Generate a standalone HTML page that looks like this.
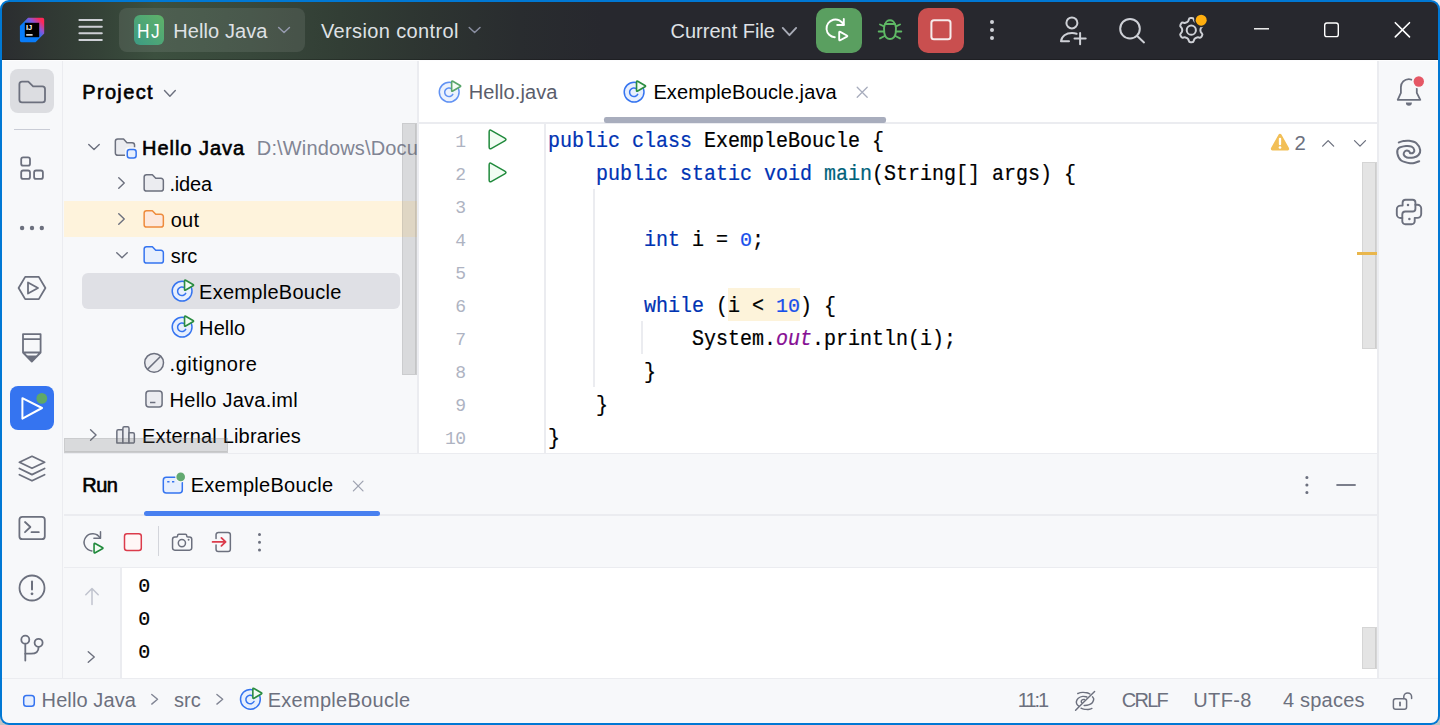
<!DOCTYPE html>
<html lang="en"><head><meta charset="utf-8"><title>Hello Java – ExempleBoucle.java</title>
<style>
html,body{margin:0;padding:0;}
body{width:1440px;height:725px;overflow:hidden;background:#fff;position:relative;font-family:"Liberation Sans", sans-serif;}
#win{position:absolute;left:0;top:0;width:1440px;height:725px;box-sizing:border-box;border-radius:9px;background:#0078D4;overflow:hidden;}
#win div,#win span{position:absolute;box-sizing:border-box;}
#titlebar{border-radius:7px 7px 0 0;}
.t{font-family:"Liberation Sans", sans-serif;line-height:1;white-space:pre;}
.m{font-family:"Liberation Mono", monospace;line-height:1;white-space:pre;}
.d{-webkit-text-stroke:0.22px currentColor;transform:scaleY(1.02);transform-origin:0 76.65%;}
.c{transform:scaleY(1.06);transform-origin:0 76.65%;-webkit-text-stroke:0.22px currentColor;}
#ico{position:absolute;left:0;top:0;width:1440px;height:725px;pointer-events:none;}
.cnr{position:absolute;width:10px;height:10px;}
</style></head><body>
<div class="cnr" style="left:0;top:715px;background:#C4C4C4"></div>
<div class="cnr" style="left:1430px;top:715px;background:#C4C4C4"></div>
<div class="cnr" style="left:1430px;top:0;background:#EDEDED"></div>
<div id="win">
<div id="titlebar" style="left:2px;top:2px;width:1436px;height:58px;background:linear-gradient(90deg,#2B2D30 0px,#303833 48px,#344237 98px,#3C503F 153px,#38483B 248px,#323E35 338px,#2D3431 428px,#292C2F 518px,#27282E 600px)"></div>
<div style="left:119px;top:8px;width:186px;height:44px;background:rgba(255,255,255,0.09);border-radius:8px;"></div>
<div style="left:134px;top:15px;width:30px;height:30px;background:linear-gradient(225deg,#60B268 0%,#3C9A84 100%);border-radius:6px;"></div>
<span class="t" style="left:137.3px;top:22.3px;font-size:19.7px;color:#fff;letter-spacing:1.7px;transform:scaleX(0.88);transform-origin:0 0;">HJ</span>
<span class="t" style="left:173.3px;top:21.07px;font-size:20px;color:#DFE1E5;letter-spacing:0.08px;">Hello Java</span>
<span class="t" style="left:321px;top:21.07px;font-size:20px;color:#DFE1E5;letter-spacing:0.36px;">Version control</span>
<span class="t" style="left:670.5px;top:21.07px;font-size:20px;color:#DFE1E5;">Current File</span>
<div style="left:816.3px;top:7.6px;width:45.3px;height:45.2px;background:#5A9F60;border-radius:10px;"></div>
<div style="left:918.4px;top:7.6px;width:45.2px;height:45.2px;background:#C94F4F;border-radius:10px;"></div>
<div style="left:2px;top:60px;width:1436px;height:663px;background:#F7F8FA;border-radius:0 0 7px 7px;"></div>
<div style="left:2px;top:60px;width:1436px;height:1.2px;background:#FDFDFE;"></div>
<div style="left:2px;top:58.8px;width:1436px;height:1.2px;background:rgba(0,0,0,0.22);"></div>
<div style="left:62.2px;top:61px;width:1.3px;height:617px;background:#EBECF0;"></div>
<div style="left:1377px;top:61px;width:2px;height:617px;background:#EBECF0;"></div>
<div style="left:419px;top:61px;width:958px;height:391.7px;background:#fff;"></div>
<div style="left:417px;top:61px;width:2px;height:391.7px;background:#EBECF0;"></div>
<div style="left:419px;top:122px;width:958px;height:1.7px;background:#EBECF0;"></div>
<div style="left:64px;top:452.7px;width:1313px;height:1.5px;background:#EBECF0;"></div>
<div style="left:64px;top:514px;width:1313px;height:2px;background:#EBECF0;"></div>
<div style="left:64px;top:566.6px;width:1313px;height:1.6px;background:#EBECF0;"></div>
<div style="left:122px;top:568.2px;width:1255px;height:109.5px;background:#fff;"></div>
<div style="left:120.3px;top:568.2px;width:1.8px;height:109.5px;background:#EBECF0;"></div>
<div style="left:2px;top:677.7px;width:1436px;height:1.5px;background:#EBECF0;"></div>
<div style="left:10px;top:69px;width:44px;height:44px;background:#DCDDE1;border-radius:8px;"></div>
<div style="left:14px;top:129px;width:36px;height:1px;background:#C9CCD6;"></div>
<div style="left:10px;top:386px;width:44px;height:44px;background:#3574F0;border-radius:8px;"></div>
<span class="t" style="left:82.2px;top:81.87px;font-size:20px;color:#000;letter-spacing:1.35px;-webkit-text-stroke:0.6px #000;">Project</span>
<div style="left:63.5px;top:201px;width:353.5px;height:36px;background:#FEF3DC;"></div>
<div style="left:82px;top:273px;width:318px;height:36px;background:#DFE0E5;border-radius:6px;"></div>
<span class="t" style="left:142.1px;top:138.07px;font-size:20px;color:#000;letter-spacing:0.95px;-webkit-text-stroke:0.6px #000;">Hello Java</span>
<span class="t" style="left:256.8px;top:138.07px;font-size:20px;color:#818594;letter-spacing:0.15px;width:160.2px;overflow:hidden;">D:\Windows\Docu</span>
<span class="t" style="left:169.5px;top:174.07px;font-size:20px;color:#000;letter-spacing:-0.2px;">.idea</span>
<span class="t" style="left:170.7px;top:210.07px;font-size:20px;color:#000;letter-spacing:0.3px;">out</span>
<span class="t" style="left:170.7px;top:246.07px;font-size:20px;color:#000;">src</span>
<span class="t" style="left:199.1px;top:282.07px;font-size:20px;color:#000;letter-spacing:0.27px;">ExempleBoucle</span>
<span class="t" style="left:199.1px;top:318.07px;font-size:20px;color:#000;letter-spacing:0.1px;">Hello</span>
<span class="t" style="left:169.6px;top:354.07px;font-size:20px;color:#000;letter-spacing:0.55px;">.gitignore</span>
<span class="t" style="left:169.6px;top:390.07px;font-size:20px;color:#000;letter-spacing:0.28px;">Hello Java.iml</span>
<span class="t" style="left:142px;top:426.07px;font-size:20px;color:#000;letter-spacing:0.19px;">External Libraries</span>
<span class="t" style="left:468.7px;top:81.77px;font-size:20px;color:#5A5D6B;letter-spacing:0.1px;">Hello.java</span>
<span class="t" style="left:653.4px;top:81.77px;font-size:20px;color:#000;letter-spacing:0.12px;">ExempleBoucle.java</span>
<div style="left:604px;top:117.1px;width:282px;height:5.6px;background:#A8ADBD;border-radius:2.2px;"></div>
<div style="left:544.2px;top:123.7px;width:1.8px;height:329px;background:#EBECF0;"></div>
<span class="m" style="left:455.3px;top:132.80px;font-size:18px;color:#AEB3C2;letter-spacing:-0.5px;">1</span>
<span class="m" style="left:455.3px;top:165.80px;font-size:18px;color:#AEB3C2;letter-spacing:-0.5px;">2</span>
<span class="m" style="left:455.3px;top:198.80px;font-size:18px;color:#AEB3C2;letter-spacing:-0.5px;">3</span>
<span class="m" style="left:455.3px;top:231.80px;font-size:18px;color:#AEB3C2;letter-spacing:-0.5px;">4</span>
<span class="m" style="left:455.3px;top:264.80px;font-size:18px;color:#AEB3C2;letter-spacing:-0.5px;">5</span>
<span class="m" style="left:455.3px;top:297.80px;font-size:18px;color:#AEB3C2;letter-spacing:-0.5px;">6</span>
<span class="m" style="left:455.3px;top:330.80px;font-size:18px;color:#AEB3C2;letter-spacing:-0.5px;">7</span>
<span class="m" style="left:455.3px;top:363.80px;font-size:18px;color:#AEB3C2;letter-spacing:-0.5px;">8</span>
<span class="m" style="left:455.3px;top:396.80px;font-size:18px;color:#AEB3C2;letter-spacing:-0.5px;">9</span>
<span class="m" style="left:445.0px;top:429.80px;font-size:18px;color:#AEB3C2;letter-spacing:-0.5px;">10</span>
<div style="left:728px;top:288px;width:72px;height:33px;background:#FDF3DA;"></div>
<span class="m c" style="left:547.9px;top:131.67px;font-size:20px;color:#0033B3;">public</span>
<span class="m c" style="left:631.9px;top:131.67px;font-size:20px;color:#0033B3;">class</span>
<span class="m c" style="left:703.9px;top:131.67px;font-size:20px;color:#000;">ExempleBoucle {</span>
<span class="m c" style="left:595.9px;top:164.67px;font-size:20px;color:#0033B3;">public</span>
<span class="m c" style="left:679.9px;top:164.67px;font-size:20px;color:#0033B3;">static</span>
<span class="m c" style="left:763.9px;top:164.67px;font-size:20px;color:#0033B3;">void</span>
<span class="m c" style="left:823.9px;top:164.67px;font-size:20px;color:#00627A;">main</span>
<span class="m c" style="left:871.9px;top:164.67px;font-size:20px;color:#000;">(String[] args) {</span>
<span class="m c" style="left:643.9px;top:230.67px;font-size:20px;color:#0033B3;">int</span>
<span class="m c" style="left:691.9px;top:230.67px;font-size:20px;color:#000;">i = </span>
<span class="m d" style="left:739.9px;top:230.67px;font-size:20px;color:#1750EB;">0</span>
<span class="m c" style="left:751.9px;top:230.67px;font-size:20px;color:#000;">;</span>
<span class="m c" style="left:643.9px;top:296.67px;font-size:20px;color:#0033B3;">while</span>
<span class="m c" style="left:715.9px;top:296.67px;font-size:20px;color:#000;">(i &lt; </span>
<span class="m d" style="left:775.9px;top:296.67px;font-size:20px;color:#1750EB;">10</span>
<span class="m c" style="left:799.9px;top:296.67px;font-size:20px;color:#000;">) {</span>
<span class="m c" style="left:691.9px;top:329.67px;font-size:20px;color:#000;">System.</span>
<span class="m c" style="left:775.9px;top:329.67px;font-size:20px;color:#871094;font-style:italic;">out</span>
<span class="m c" style="left:811.9px;top:329.67px;font-size:20px;color:#000;">.println(i);</span>
<span class="m c" style="left:643.9px;top:362.67px;font-size:20px;color:#000;">}</span>
<span class="m c" style="left:595.9px;top:395.67px;font-size:20px;color:#000;">}</span>
<span class="m c" style="left:547.9px;top:428.67px;font-size:20px;color:#000;">}</span>
<div style="left:593.2px;top:189px;width:1.4px;height:198px;background:#EBECF0;"></div>
<div style="left:641.2px;top:321px;width:1.4px;height:33px;background:#EBECF0;"></div>
<span class="t" style="left:1294.4px;top:132.62px;font-size:20.3px;color:#6C707E;">2</span>
<span class="t" style="left:82.3px;top:474.87px;font-size:20px;color:#000;letter-spacing:-0.55px;-webkit-text-stroke:0.6px #000;">Run</span>
<span class="t" style="left:190.7px;top:474.87px;font-size:20px;color:#000;letter-spacing:0.28px;">ExempleBoucle</span>
<div style="left:144px;top:511px;width:236px;height:5px;background:#4880F0;border-radius:2.5px;"></div>
<div style="left:158px;top:526px;width:1px;height:30px;background:#D3D5DB;"></div>
<span class="m d" style="left:138.3px;top:577.27px;font-size:20px;color:#000;">0</span>
<span class="m d" style="left:138.3px;top:610.27px;font-size:20px;color:#000;">0</span>
<span class="m d" style="left:138.3px;top:643.27px;font-size:20px;color:#000;">0</span>
<span class="t" style="left:41.6px;top:689.87px;font-size:20px;color:#6C707E;letter-spacing:0.1px;">Hello Java</span>
<span class="t" style="left:174px;top:689.87px;font-size:20px;color:#6C707E;">src</span>
<span class="t" style="left:267.7px;top:689.87px;font-size:20px;color:#6C707E;letter-spacing:0.28px;">ExempleBoucle</span>
<span class="t" style="left:1017.8px;top:690.07px;font-size:20px;color:#6C707E;letter-spacing:-2.0px;">11:1</span>
<span class="t" style="left:1121.7px;top:690.07px;font-size:20px;color:#6C707E;letter-spacing:-1.7px;">CRLF</span>
<span class="t" style="left:1193.2px;top:690.07px;font-size:20px;color:#6C707E;letter-spacing:0.4px;">UTF-8</span>
<span class="t" style="left:1283px;top:690.07px;font-size:20px;color:#6C707E;letter-spacing:0.2px;">4 spaces</span>
<svg id="ico" viewBox="0 0 1440 725" width="1440" height="725">
<path d="M278.65000000000003 27.55 L284.05 32.45 L289.45 27.55" fill="none" stroke="#969BAF" stroke-width="1.5" stroke-linecap="round" stroke-linejoin="round"/>
<path d="M469.20000000000005 27.55 L474.6 32.45 L480.0 27.55" fill="none" stroke="#8A8FA2" stroke-width="1.5" stroke-linecap="round" stroke-linejoin="round"/>
<path d="M782.75 27.95 L789.45 35.15 L796.1500000000001 27.95" fill="none" stroke="#A8ABB6" stroke-width="1.9" stroke-linecap="round" stroke-linejoin="round"/>
<path d="M79.4 19.95 H101.8" stroke="#CED0D6" stroke-width="2" stroke-linecap="round"/>
<path d="M79.4 26.65 H101.8" stroke="#CED0D6" stroke-width="2" stroke-linecap="round"/>
<path d="M79.4 33.35 H101.8" stroke="#CED0D6" stroke-width="2" stroke-linecap="round"/>
<path d="M79.4 40.05 H101.8" stroke="#CED0D6" stroke-width="2" stroke-linecap="round"/>
<defs><linearGradient id="lg" x1="0" y1="1" x2="1" y2="0"><stop offset="0.47" stop-color="#087CFA"/><stop offset="0.68" stop-color="#8A55D8"/><stop offset="0.88" stop-color="#FE2857"/></linearGradient></defs>
<path d="M28 17.8 H42.5 a1.7 1.7 0 0 1 1.7 1.7 V33.5 L35.5 42.2 H21.6 a1.7 1.7 0 0 1 -1.7 -1.7 V26 Z" fill="url(#lg)"/>
<rect x="24.8" y="22.8" width="14.4" height="14.4" fill="#000"/>
<text x="26" y="29.8" font-family="Liberation Sans, sans-serif" font-size="7.5" font-weight="700" fill="#fff">IJ</text>
<rect x="26.2" y="34.2" width="6.4" height="1.4" fill="#fff"/>
<g fill="none" stroke="#fff" stroke-width="1.9" stroke-linecap="round" stroke-linejoin="round"><path d="M834.8 37.3 A8.9 8.9 0 1 1 843.6 24.9"/><path d="M837.2 25 H843.8 V18.9"/><path d="M839.20 32.50 Q839.20 31.30 840.25 31.88 L846.85 35.47 Q847.90 36.05 846.85 36.63 L840.25 40.22 Q839.20 40.80 839.20 39.60 Z" fill="#5A9F60"/></g>
<g fill="none" stroke="#5FB865" stroke-width="1.9" stroke-linecap="round" stroke-linejoin="round"><path d="M884.9 24 H895.1 C896.3 27 896.3 30 895.7 33 C895 37 892.8 39 890 39 C887.2 39 885 37 884.3 33 C883.7 30 883.7 27 884.9 24 Z"/><path d="M885.5 24 a4.5 3.7 0 0 1 9 0"/><path d="M884.1 26.4 L880 24.5 M883.9 31.5 H878.7 M884.6 36 L880 38.4 M895.9 26.4 L900 24.5 M896.1 31.5 H901.3 M895.4 36 L900 38.4"/></g>
<rect x="931.4" y="20.25" width="19.1" height="19.1" rx="2.6" fill="none" stroke="#F6ECEC" stroke-width="2"/>
<circle cx="992" cy="21.9" r="2" fill="#CED0D6"/>
<circle cx="992" cy="30" r="2" fill="#CED0D6"/>
<circle cx="992" cy="38.1" r="2" fill="#CED0D6"/>
<g fill="none" stroke="#CED0D6" stroke-width="2" stroke-linecap="round"><circle cx="1071.9" cy="22.9" r="5.5"/><path d="M1061 41.3 c0.5 -5 5 -8.3 11 -8.3 c1.8 0 3.3 0.3 4.6 0.8 M1061 41.3 H1069"/><path d="M1080.1 33 V44.2 M1074.5 38.6 H1085.7"/></g>
<g fill="none" stroke="#CED0D6" stroke-width="2" stroke-linecap="round"><circle cx="1130" cy="28.7" r="9.8"/><path d="M1137.2 36 L1144 42.4"/></g>
<path d="M1188.81 19.51 Q1189.12 18.04 1190.62 18.04 L1191.98 18.04 Q1193.48 18.04 1193.79 19.51 L1193.86 19.84 Q1194.17 21.31 1195.47 22.06 L1196.22 22.49 Q1197.52 23.24 1198.95 22.78 L1199.27 22.67 Q1200.69 22.21 1201.44 23.51 L1202.12 24.68 Q1202.87 25.98 1201.76 26.99 L1201.51 27.21 Q1200.40 28.22 1200.40 29.72 L1200.40 30.58 Q1200.40 32.08 1201.51 33.09 L1201.76 33.31 Q1202.87 34.32 1202.12 35.62 L1201.44 36.79 Q1200.69 38.09 1199.27 37.63 L1198.95 37.52 Q1197.52 37.06 1196.22 37.81 L1195.47 38.24 Q1194.17 38.99 1193.86 40.46 L1193.79 40.79 Q1193.48 42.26 1191.98 42.26 L1190.62 42.26 Q1189.12 42.26 1188.81 40.79 L1188.74 40.46 Q1188.43 38.99 1187.13 38.24 L1186.38 37.81 Q1185.08 37.06 1183.65 37.52 L1183.33 37.63 Q1181.91 38.09 1181.16 36.79 L1180.48 35.62 Q1179.73 34.32 1180.84 33.31 L1181.09 33.09 Q1182.20 32.08 1182.20 30.58 L1182.20 29.72 Q1182.20 28.22 1181.09 27.21 L1180.84 26.99 Q1179.73 25.98 1180.48 24.68 L1181.16 23.51 Q1181.91 22.21 1183.33 22.67 L1183.65 22.78 Q1185.08 23.24 1186.38 22.49 L1187.13 22.06 Q1188.43 21.31 1188.74 19.84 Z" fill="none" stroke="#CED0D6" stroke-width="2" stroke-linejoin="round"/>
<circle cx="1191.3" cy="30.15" r="4.6" fill="none" stroke="#CED0D6" stroke-width="2"/>
<circle cx="1201.2" cy="20.2" r="7" fill="#27282E"/><circle cx="1201.2" cy="20.2" r="5.5" fill="#FFAF0F"/>
<path d="M1254 28.8 H1269" stroke="#fff" stroke-width="1.4"/>
<rect x="1324.7" y="23" width="13.6" height="13.6" rx="2.2" fill="none" stroke="#fff" stroke-width="1.4"/>
<path d="M1395.3 22.7 L1409.5 36.9 M1409.5 22.7 L1395.3 36.9" stroke="#fff" stroke-width="1.6" stroke-linecap="round"/>
<path d="M19.4 84.3 a2.6 2.6 0 0 1 2.6 -2.6 h6.3 l4.8 4.6 h9.3 a2.6 2.6 0 0 1 2.6 2.6 v10.9 a2.6 2.6 0 0 1 -2.6 2.6 h-20.4 a2.6 2.6 0 0 1 -2.6 -2.6 Z" fill="none" stroke="#6C707E" stroke-width="1.8" stroke-linejoin="round"/>
<rect x="21.2" y="157.3" width="8.8" height="8.4" rx="2" fill="none" stroke="#6C707E" stroke-width="1.8"/>
<rect x="21.2" y="170.5" width="8.8" height="8.4" rx="2" fill="none" stroke="#6C707E" stroke-width="1.8"/>
<rect x="34.1" y="170.5" width="8.8" height="8.4" rx="2" fill="none" stroke="#6C707E" stroke-width="1.8"/>
<circle cx="22.1" cy="228" r="2.2" fill="#6C707E"/>
<circle cx="32" cy="228" r="2.2" fill="#6C707E"/>
<circle cx="41.8" cy="228" r="2.2" fill="#6C707E"/>
<path d="M18.6 288 L25.2 276.9 H38.8 L45.4 288 L38.8 299.1 H25.2 Z" fill="none" stroke="#6C707E" stroke-width="1.8" stroke-linejoin="round"/>
<path d="M28 282.5 L38 288 L28 293.5 Z" fill="none" stroke="#6C707E" stroke-width="1.8" stroke-linejoin="round"/>
<path d="M23 334.2 H40.6 V352.5 L31.8 361.5 L23 352.5 Z M23 339.2 H40.6 M23 352.5 H40.6" fill="none" stroke="#6C707E" stroke-width="1.8" stroke-linejoin="round"/>
<path d="M27 356 H36.6 L31.8 361.5 Z" fill="#6C707E" stroke="#6C707E" stroke-width="1" stroke-linejoin="round"/>
<path d="M22.4 398.2 L42 408 L22.4 418.6 Z" fill="none" stroke="#fff" stroke-width="2" stroke-linejoin="round"/>
<circle cx="41.8" cy="398.4" r="5.4" fill="#5FA868"/>
<g fill="none" stroke="#6C707E" stroke-width="1.8" stroke-linejoin="round" stroke-linecap="round"><path d="M32 456.3 L44.6 462.3 L32 468.3 L19.4 462.3 Z"/><path d="M19.4 468.5 L32 474.6 L44.6 468.5"/><path d="M19.4 474.7 L32 480.8 L44.6 474.7"/></g>
<g fill="none" stroke="#6C707E" stroke-width="1.8" stroke-linejoin="round" stroke-linecap="round"><rect x="19.4" y="516.8" width="25.4" height="22.4" rx="3"/><path d="M25 522 L30.4 527 L25 532.2"/><path d="M31.5 532.2 H38.8"/></g>
<circle cx="32" cy="588" r="12.5" fill="none" stroke="#6C707E" stroke-width="1.8"/><path d="M32 581.5 V589.5" stroke="#6C707E" stroke-width="2" stroke-linecap="round"/><circle cx="32" cy="593.8" r="1.4" fill="#6C707E"/>
<g fill="none" stroke="#6C707E" stroke-width="1.8" stroke-linecap="round"><circle cx="25.3" cy="639.7" r="4"/><circle cx="38.6" cy="642.8" r="4"/><path d="M25.3 643.8 V660.5"/><path d="M38.6 646.9 c0 5 -3.5 6.8 -7.5 6.8 H25.3"/></g>
<path d="M164.5 90.39999999999999 L169.9 96.2 L175.3 90.39999999999999" fill="none" stroke="#6C707E" stroke-width="1.4" stroke-linecap="round" stroke-linejoin="round"/>
<path d="M88.75 144.5 L94 149.60000000000002 L99.25 144.5" fill="none" stroke="#6C707E" stroke-width="1.4" stroke-linecap="round" stroke-linejoin="round"/>
<path d="M115.35 141.35 a2.4 2.4 0 0 1 2.4 -2.4 H123.55 L126.95 142.64999999999998 H132.14999999999998 a2.4 2.4 0 0 1 2.4 2.4 V152.95 a2.4 2.4 0 0 1 -2.4 2.4 H117.75 a2.4 2.4 0 0 1 -2.4 -2.4 Z" fill="#EBECF0" stroke="#6C707E" stroke-width="1.5" stroke-linejoin="round"/>
<rect x="125" y="147.3" width="13.4" height="13" rx="3.5" fill="#F7F8FA"/>
<rect x="127.25" y="149.55" width="8.9" height="8.5" rx="2.5" fill="#E7EFFD" stroke="#3574F0" stroke-width="1.5"/>
<path d="M118.75 177.75 L124.25 183 L118.75 188.25" fill="none" stroke="#6C707E" stroke-width="1.4" stroke-linecap="round" stroke-linejoin="round"/>
<path d="M144.15 177.05 a2.4 2.4 0 0 1 2.4 -2.4 H152.35 L155.75 178.35 H160.95 a2.4 2.4 0 0 1 2.4 2.4 V188.65 a2.4 2.4 0 0 1 -2.4 2.4 H146.55 a2.4 2.4 0 0 1 -2.4 -2.4 Z" fill="#EBECF0" stroke="#6C707E" stroke-width="1.5" stroke-linejoin="round"/>
<path d="M118.75 213.75 L124.25 219 L118.75 224.25" fill="none" stroke="#6C707E" stroke-width="1.4" stroke-linecap="round" stroke-linejoin="round"/>
<path d="M144.15 213.05 a2.4 2.4 0 0 1 2.4 -2.4 H152.35 L155.75 214.35 H160.95 a2.4 2.4 0 0 1 2.4 2.4 V224.65 a2.4 2.4 0 0 1 -2.4 2.4 H146.55 a2.4 2.4 0 0 1 -2.4 -2.4 Z" fill="#FDE8DC" stroke="#EE8B3C" stroke-width="1.5" stroke-linejoin="round"/>
<path d="M116.75 252.64999999999998 L122 257.75 L127.25 252.64999999999998" fill="none" stroke="#6C707E" stroke-width="1.4" stroke-linecap="round" stroke-linejoin="round"/>
<path d="M144.15 249.05 a2.4 2.4 0 0 1 2.4 -2.4 H152.35 L155.75 250.35 H160.95 a2.4 2.4 0 0 1 2.4 2.4 V260.65000000000003 a2.4 2.4 0 0 1 -2.4 2.4 H146.55 a2.4 2.4 0 0 1 -2.4 -2.4 Z" fill="#E7EFFD" stroke="#3574F0" stroke-width="1.5" stroke-linejoin="round"/>
<g opacity="1"><circle cx="182.1" cy="291.1" r="9.9" fill="#E7EFFD" stroke="#3574F0" stroke-width="1.5"/><path d="M185.70 293.32 A4.3 4.3 0 1 1 184.66 288.01" fill="none" stroke="#3574F0" stroke-width="1.5" stroke-linecap="round"/><path d="M184.55 280.90 Q184.55 279.60 185.67 280.25 L192.98 284.50 Q194.10 285.15 192.98 285.80 L185.67 290.05 Q184.55 290.70 184.55 289.40 Z" fill="#F2FCF3" stroke="#2A8C41" stroke-width="1.6" stroke-linejoin="round"/></g>
<g opacity="1"><circle cx="182.1" cy="327.1" r="9.9" fill="#E7EFFD" stroke="#3574F0" stroke-width="1.5"/><path d="M185.70 329.32 A4.3 4.3 0 1 1 184.66 324.01" fill="none" stroke="#3574F0" stroke-width="1.5" stroke-linecap="round"/><path d="M184.55 316.90 Q184.55 315.60 185.67 316.25 L192.98 320.50 Q194.10 321.15 192.98 321.80 L185.67 326.05 Q184.55 326.70 184.55 325.40 Z" fill="#F2FCF3" stroke="#2A8C41" stroke-width="1.6" stroke-linejoin="round"/></g>
<circle cx="154.1" cy="362.8" r="9.4" fill="#EBECF0" stroke="#6C707E" stroke-width="1.5"/><path d="M147.5 369.4 L160.7 356.2" stroke="#6C707E" stroke-width="1.5"/>
<rect x="145.95" y="391" width="16.15" height="16.05" rx="3" fill="#EBECF0" stroke="#6C707E" stroke-width="1.5"/><path d="M150 402.5 H155.4" stroke="#6C707E" stroke-width="1.5"/>
<path d="M90.55 429.75 L96.05 435 L90.55 440.25" fill="none" stroke="#6C707E" stroke-width="1.4" stroke-linecap="round" stroke-linejoin="round"/>
<g fill="#EBECF0" stroke="#6C707E" stroke-width="1.5" stroke-linejoin="round"><path d="M116.85 443.05 V431.2 a1.4 1.4 0 0 1 1.4 -1.4 H122.9 V443.05 Z"/><path d="M122.9 443.05 V428.2 a1.4 1.4 0 0 1 1.4 -1.4 H127.6 a1.4 1.4 0 0 1 1.4 1.4 V443.05 Z"/><path d="M129 443.05 V432.85 H132.95 a1.4 1.4 0 0 1 1.4 1.4 V441.65 a1.4 1.4 0 0 1 -1.4 1.4 Z"/></g>
<g opacity="0.78"><circle cx="449.2" cy="92.1" r="9.9" fill="#E7EFFD" stroke="#3574F0" stroke-width="1.5"/><path d="M452.80 94.32 A4.3 4.3 0 1 1 451.76 89.01" fill="none" stroke="#3574F0" stroke-width="1.5" stroke-linecap="round"/><path d="M451.65 81.90 Q451.65 80.60 452.77 81.25 L460.08 85.50 Q461.20 86.15 460.08 86.80 L452.77 91.05 Q451.65 91.70 451.65 90.40 Z" fill="#F2FCF3" stroke="#2A8C41" stroke-width="1.6" stroke-linejoin="round"/></g>
<g opacity="1"><circle cx="634.1" cy="92.1" r="9.9" fill="#E7EFFD" stroke="#3574F0" stroke-width="1.5"/><path d="M637.70 94.32 A4.3 4.3 0 1 1 636.66 89.01" fill="none" stroke="#3574F0" stroke-width="1.5" stroke-linecap="round"/><path d="M636.55 81.90 Q636.55 80.60 637.67 81.25 L644.98 85.50 Q646.10 86.15 644.98 86.80 L637.67 91.05 Q636.55 91.70 636.55 90.40 Z" fill="#F2FCF3" stroke="#2A8C41" stroke-width="1.6" stroke-linejoin="round"/></g>
<path d="M857.2 87.2 L867.2 97.2 M867.2 87.2 L857.2 97.2" stroke="#A8ADBD" stroke-width="1.3" stroke-linecap="round"/>
<path d="M489.15 131.95 Q489.15 129.15 491.58 130.54 L504.77 138.06 Q507.20 139.45 504.77 140.84 L491.58 148.36 Q489.15 149.75 489.15 146.95 Z" fill="#F2FCF3" stroke="#208A3C" stroke-width="1.5" stroke-linejoin="round"/>
<path d="M489.15 164.95 Q489.15 162.15 491.58 163.54 L504.77 171.06 Q507.20 172.45 504.77 173.84 L491.58 181.36 Q489.15 182.75 489.15 179.95 Z" fill="#F2FCF3" stroke="#208A3C" stroke-width="1.5" stroke-linejoin="round"/>
<path d="M1280 135.4 L1287.6 148.8 H1272.4 Z" fill="#F2BF57" stroke="#F2BF57" stroke-width="3.2" stroke-linejoin="round"/>
<path d="M1280 138.8 V144.2" stroke="#fff" stroke-width="2.3" stroke-linecap="round"/><circle cx="1280" cy="147.5" r="1.35" fill="#fff"/>
<path d="M1322.65 146.15 L1328.15 140.65 L1333.65 146.15" fill="none" stroke="#6C707E" stroke-width="1.3" stroke-linecap="round" stroke-linejoin="round"/>
<path d="M1354.5 140.65 L1360 146.15 L1365.5 140.65" fill="none" stroke="#6C707E" stroke-width="1.3" stroke-linecap="round" stroke-linejoin="round"/>
<path d="M1397.7 99.8 L1400.9 92.9 V87 a7.95 7.95 0 0 1 15.9 0 V92.9 L1420.3 99.8 Z" fill="none" stroke="#6C707E" stroke-width="1.8" stroke-linejoin="round"/>
<path d="M1405.9 102.4 a3 3.3 0 0 0 6 0 Z" fill="#6C707E"/>
<circle cx="1418.8" cy="81.5" r="6.9" fill="#F7F8FA"/><circle cx="1418.8" cy="81.5" r="5.2" fill="#E55765"/>
<path d="M1398.80 142.40 C1399.58 142.18 1401.83 141.37 1403.50 141.10 C1405.17 140.83 1406.65 140.45 1408.80 140.80 C1410.95 141.15 1414.50 141.65 1416.40 143.20 C1418.30 144.75 1419.85 148.13 1420.20 150.10 C1420.55 152.07 1419.58 153.78 1418.50 155.00 C1417.42 156.22 1415.65 157.00 1413.70 157.40 C1411.75 157.80 1408.47 157.87 1406.80 157.40 C1405.13 156.93 1404.05 155.58 1403.70 154.60 C1403.35 153.62 1404.18 152.18 1404.70 151.50 C1405.22 150.82 1406.12 150.55 1406.80 150.50 C1407.48 150.45 1408.28 150.85 1408.80 151.20 C1409.32 151.55 1409.72 152.37 1409.90 152.60" fill="none" stroke="#6C707E" stroke-width="2.05" stroke-linecap="round"/>
<path d="M1419.20 161.20 C1418.50 161.47 1416.50 162.47 1415.00 162.80 C1413.50 163.13 1412.50 163.58 1410.20 163.20 C1407.90 162.82 1403.33 162.10 1401.20 160.50 C1399.07 158.90 1397.80 155.67 1397.40 153.60 C1397.00 151.53 1397.35 149.37 1398.80 148.10 C1400.25 146.83 1403.97 146.23 1406.10 146.00 C1408.23 145.77 1410.23 146.02 1411.60 146.70 C1412.97 147.38 1414.07 149.07 1414.30 150.10 C1414.53 151.13 1413.68 152.38 1413.00 152.90 C1412.32 153.42 1410.67 153.15 1410.20 153.20" fill="none" stroke="#6C707E" stroke-width="2.05" stroke-linecap="round"/>
<g fill="none" stroke="#6C707E" stroke-width="1.9" stroke-linecap="round" stroke-linejoin="round"><path d="M1402.6 205.6 V202.8 a3 3 0 0 1 3 -3 h7 a2.8 2.8 0 0 1 2.8 2.8 V208.7 a2.8 2.8 0 0 1 -2.8 2.8 H1405.3 a3 3 0 0 0 -3 3 V218 H1400.6 a3.8 3.8 0 0 1 -3.8 -3.8 V209.4 a3.8 3.8 0 0 1 3.8 -3.8 Z"/><path d="M1415.4 204.8 H1417.4 a3.8 3.8 0 0 1 3.8 3.8 V214.1 a3.8 3.8 0 0 1 -3.8 3.8 H1414.7 V221.2 a3 3 0 0 1 -3 3 H1405.3 a3 3 0 0 1 -3 -3 V218"/></g>
<circle cx="1408" cy="205.1" r="1.25" fill="#6C707E"/><circle cx="1409.4" cy="219.1" r="1.25" fill="#6C707E"/>
<rect x="163.3" y="477.3" width="19" height="15.8" rx="3" fill="#E7EFFD" stroke="#3574F0" stroke-width="1.5"/><path d="M167.2 481.8 H169.5 M172 481.8 H174.3" stroke="#3574F0" stroke-width="1.4"/>
<circle cx="180.8" cy="476.8" r="5.600" fill="#F7F8FA"/><circle cx="180.7" cy="476.9" r="4.3" fill="#62A970"/>
<path d="M353.4 481.1 L363 490.9 M363 481.1 L353.4 490.9" stroke="#9EA2B0" stroke-width="1.25" stroke-linecap="round"/>
<path d="M1306.9 477.500 v0.010 M1306.9 485 v0.010 M1306.9 492.500 v0.010" stroke="#6C707E" stroke-width="3.1" stroke-linecap="round"/>
<path d="M1336.4 485 H1355.7" stroke="#6C707E" stroke-width="1.8"/>
<g fill="none" stroke="#6C707E" stroke-width="1.5" stroke-linecap="round" stroke-linejoin="round"><path d="M91.9 550.9 A8.6 8.6 0 1 1 100.3 538.3"/><path d="M93.9 538.3 H100.5 V531.7"/></g>
<path d="M94.05 544.20 Q94.05 542.90 95.19 543.53 L102.36 547.52 Q103.50 548.15 102.36 548.78 L95.19 552.77 Q94.05 553.40 94.05 552.10 Z" fill="#F2FCF3" stroke="#208A3C" stroke-width="1.6" stroke-linejoin="round"/>
<rect x="124.500" y="533.700" width="16.800" height="16.800" rx="2.500" fill="#FFF7F7" stroke="#DB3B4B" stroke-width="1.5"/>
<g fill="none" stroke="#6C707E" stroke-width="1.5" stroke-linejoin="round"><path d="M172.55 539.25 a2.3 2.3 0 0 1 2.3 -2.3 h1.6 a1.2 1.2 0 0 0 1.2 -1.2 v-0.4 a1.2 1.2 0 0 1 1.2 -1.2 h6.6 a1.2 1.2 0 0 1 1.2 1.2 v0.4 a1.2 1.2 0 0 0 1.2 1.2 h1.6 a2.3 2.3 0 0 1 2.3 2.3 v8.6 a2.3 2.3 0 0 1 -2.3 2.3 h-14.6 a2.3 2.3 0 0 1 -2.3 -2.3 Z"/><circle cx="181.9" cy="543.1" r="3.6"/></g><circle cx="188.6" cy="539.8" r="0.95" fill="#6C707E"/>
<path d="M216.05 538.6 V534.75 a2.3 2.3 0 0 1 2.3 -2.3 H228.05 a2.3 2.3 0 0 1 2.3 2.3 V549.25 a2.3 2.3 0 0 1 -2.3 2.3 H218.35 a2.3 2.3 0 0 1 -2.3 -2.3 V545.1" fill="none" stroke="#6C707E" stroke-width="1.5" stroke-linecap="round"/>
<path d="M212.6 541.9 H225.4 M221.4 537.9 L225.6 541.9 L221.4 545.9" fill="none" stroke="#DB3B4B" stroke-width="1.8" stroke-linecap="round" stroke-linejoin="round"/>
<path d="M259.500 534.500 v0.010 M259.500 542.200 v0.010 M259.500 550 v0.010" stroke="#6C707E" stroke-width="3" stroke-linecap="round"/>
<path d="M92 604.500 V588.500 M85.800 594.700 L92 588.500 L98.200 594.700" fill="none" stroke="#C0C3CE" stroke-width="1.500" stroke-linecap="round" stroke-linejoin="round"/>
<path d="M88.25 651.75 L94.25 657 L88.25 662.25" fill="none" stroke="#6C707E" stroke-width="1.4" stroke-linecap="round" stroke-linejoin="round"/>
<rect x="23.700" y="695.500" width="10.600" height="10.800" rx="2.800" fill="#E7EFFD" stroke="#3574F0" stroke-width="1.500"/>
<path d="M151.75 694.5 L157.55 699.3 L151.75 704.0999999999999" fill="none" stroke="#818594" stroke-width="1.4" stroke-linecap="round" stroke-linejoin="round"/>
<path d="M216.9 694.5 L222.70000000000002 699.3 L216.9 704.0999999999999" fill="none" stroke="#818594" stroke-width="1.4" stroke-linecap="round" stroke-linejoin="round"/>
<g opacity="1"><circle cx="250.4" cy="699.3" r="9.9" fill="#E7EFFD" stroke="#3574F0" stroke-width="1.5"/><path d="M254.00 701.52 A4.3 4.3 0 1 1 252.96 696.21" fill="none" stroke="#3574F0" stroke-width="1.5" stroke-linecap="round"/><path d="M252.85 689.10 Q252.85 687.80 253.97 688.45 L261.28 692.70 Q262.40 693.35 261.28 694.00 L253.97 698.25 Q252.85 698.90 252.85 697.60 Z" fill="#F2FCF3" stroke="#2A8C41" stroke-width="1.6" stroke-linejoin="round"/></g>
<path d="M1075.60 710.20 C1078.77 707.07 1091.43 694.53 1094.60 691.40" fill="none" stroke="#6C707E" stroke-width="1.45" stroke-linecap="round"/>
<path d="M1077.80 693.50 C1078.22 693.35 1079.40 692.78 1080.30 692.60 C1081.20 692.42 1082.12 692.37 1083.20 692.40 C1084.28 692.43 1085.70 692.55 1086.80 692.80 C1087.90 693.05 1089.30 693.72 1089.80 693.90" fill="none" stroke="#6C707E" stroke-width="1.45" stroke-linecap="round"/>
<path d="M1086.90 697.00 C1086.22 696.90 1084.23 696.20 1082.80 696.40 C1081.37 696.60 1079.37 697.35 1078.30 698.20 C1077.23 699.05 1076.63 700.50 1076.40 701.50 C1076.17 702.50 1076.52 703.43 1076.90 704.20 C1077.28 704.97 1078.40 705.78 1078.70 706.10" fill="none" stroke="#6C707E" stroke-width="1.45" stroke-linecap="round"/>
<path d="M1084.40 699.50 C1084.10 699.53 1083.08 699.50 1082.60 699.70 C1082.12 699.90 1081.72 700.35 1081.50 700.70 C1081.28 701.05 1081.25 701.45 1081.30 701.80 C1081.35 702.15 1081.72 702.63 1081.80 702.80" fill="none" stroke="#6C707E" stroke-width="1.45" stroke-linecap="round"/>
<path d="M1092.50 696.80 C1092.68 697.08 1093.43 697.92 1093.60 698.50 C1093.77 699.08 1093.72 699.60 1093.50 700.30 C1093.28 701.00 1092.92 702.02 1092.30 702.70 C1091.68 703.38 1090.68 703.97 1089.80 704.40 C1088.92 704.83 1087.93 705.12 1087.00 705.30 C1086.07 705.48 1084.67 705.47 1084.20 705.50" fill="none" stroke="#6C707E" stroke-width="1.45" stroke-linecap="round"/>
<path d="M1081.10 708.20 C1081.52 708.35 1082.70 708.90 1083.60 709.10 C1084.50 709.30 1085.53 709.38 1086.50 709.40 C1087.47 709.42 1088.50 709.37 1089.40 709.20 C1090.30 709.03 1091.48 708.53 1091.90 708.40" fill="none" stroke="#6C707E" stroke-width="1.45" stroke-linecap="round"/>
<g fill="none" stroke="#6C707E" stroke-width="1.500" stroke-linecap="round"><rect x="1393.400" y="698.800" width="13.200" height="10.400" rx="2.300"/><path d="M1400 702.500 V705.500" stroke-width="1.800"/><path d="M1403.800 698.500 v-1.700 a3.900 3.900 0 0 1 7.800 0 v1.700"/></g>
</svg>
<div style="left:402px;top:123px;width:15px;height:252px;background:rgba(110,110,110,0.215);border:1px solid rgba(90,90,90,0.10);"></div>
<div style="left:415px;top:124px;width:1px;height:250px;background:rgba(90,90,90,0.16);"></div>
<div style="left:64px;top:438px;width:164px;height:15px;background:rgba(110,110,110,0.215);border:1px solid rgba(90,90,90,0.10);"></div>
<div style="left:65px;top:451px;width:162px;height:1px;background:rgba(90,90,90,0.16);"></div>
<div style="left:1362px;top:162px;width:15px;height:187px;background:rgba(110,110,110,0.19);border:1px solid rgba(90,90,90,0.10);"></div>
<div style="left:1375px;top:163px;width:1px;height:185px;background:rgba(90,90,90,0.16);"></div>
<div style="left:1357px;top:252px;width:20px;height:3px;background:#E9B64C;"></div>
<div style="left:1362px;top:627px;width:15px;height:42px;background:rgba(110,110,110,0.19);border:1px solid rgba(90,90,90,0.10);"></div>
<div style="left:1375px;top:628px;width:1px;height:40px;background:rgba(90,90,90,0.16);"></div>
</div>
</body></html>
